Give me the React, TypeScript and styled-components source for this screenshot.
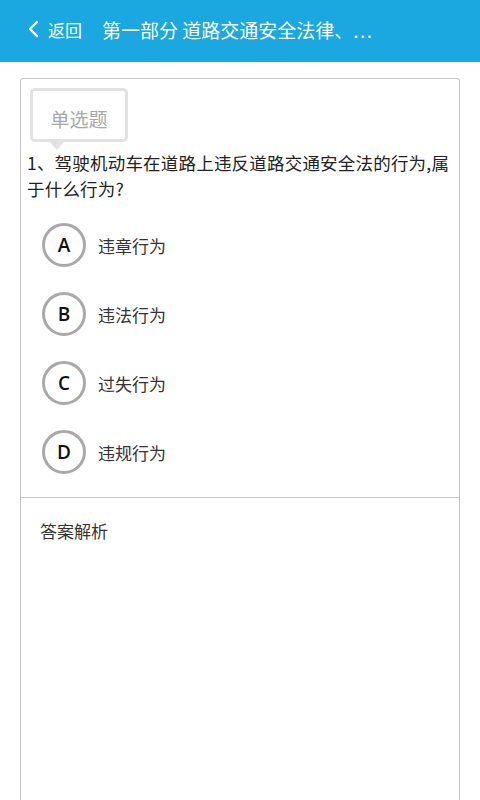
import React from "react";
import styled, { createGlobalStyle } from "styled-components";

const Global = createGlobalStyle`
  html, body { margin: 0; padding: 0; background: #fff; }
  body { font-family: "Noto Sans CJK SC", "Noto Sans", sans-serif; }
  * { box-sizing: border-box; }
`;

const Page = styled.div`
  width: 480px;
  height: 800px;
  overflow: hidden;
  display: flex;
  flex-direction: column;
  background: #fff;
`;

const Header = styled.header`
  height: 62px;
  flex: none;
  background: #1ba7e0;
  display: flex;
  align-items: center;
  padding: 0 0 4px 27px;
  color: #fff;
`;

const Back = styled.div`
  display: flex;
  align-items: center;
  gap: 9px;
  font-size: 17px;
  margin-right: 20px;
`;

const Title = styled.div`
  font-size: 19px;
  white-space: nowrap;
`;

const Dots = styled.span`
  letter-spacing: 1.5px;
`;

const Body = styled.main`
  flex: 1;
  padding: 16px 20px 0 20px;
  display: flex;
`;

const Card = styled.section`
  flex: 1;
  border: 1.5px solid #c6c6c6;
  border-bottom: none;
  border-radius: 3px 3px 0 0;
  display: flex;
  flex-direction: column;
`;

const QuestionArea = styled.div`
  padding: 9px 2px 0 6px;
  height: 419px;
  border-bottom: 1.5px solid #c6c6c6;
`;

const Tag = styled.div`
  position: relative;
  margin-left: 3px;
  width: 98px;
  height: 54px;
  border: 3px solid #e2e2e2;
  border-radius: 5px;
  display: flex;
  align-items: center;
  justify-content: center;
  padding-top: 7px;
  font-size: 19px;
  color: #a8a8a8;
  &::after {
    content: "";
    position: absolute;
    left: 16px;
    bottom: -11px;
    border-left: 8px solid transparent;
    border-right: 8px solid transparent;
    border-top: 9px solid #e2e2e2;
  }
`;

const Question = styled.p`
  margin: 8px 0 0 0;
  font-size: 17.5px;
  letter-spacing: 0.2px;
  line-height: 26px;
  color: #222;
`;

const Options = styled.ul`
  list-style: none;
  margin: 21px 0 0 15px;
  padding: 0;
  display: flex;
  flex-direction: column;
  gap: 25px;
`;

const Option = styled.li`
  display: flex;
  align-items: center;
  gap: 12px;
  font-size: 17px;
  color: #333;
`;

const Circle = styled.span`
  width: 44px;
  height: 44px;
  border-radius: 50%;
  border: 3px solid #a9a9a9;
  display: flex;
  align-items: center;
  justify-content: center;
  font-family: "Open Sans", sans-serif;
  font-weight: 600;
  font-size: 19px;
  color: #111;
`;

const Analysis = styled.div`
  padding: 20px 0 0 19px;
  font-size: 17px;
  color: #333;
`;

const opts = [
  ["A", "违章行为"],
  ["B", "违法行为"],
  ["C", "过失行为"],
  ["D", "违规行为"],
];

export default function App() {
  return (
    <Page>
      <Global />
      <Header>
        <Back>
          <svg width="12" height="18" viewBox="0 0 12 18">
            <path d="M10 2 L3 9 L10 16" fill="none" stroke="#fff" strokeWidth="2.4" strokeLinecap="round" strokeLinejoin="round" />
          </svg>
          <span>返回</span>
        </Back>
        <Title>
          第一部分 道路交通安全法律、<Dots>...</Dots>
        </Title>
      </Header>
      <Body>
        <Card>
          <QuestionArea>
            <Tag>单选题</Tag>
            <Question>1、驾驶机动车在道路上违反道路交通安全法的行为,属于什么行为?</Question>
            <Options>
              {opts.map(([k, t]) => (
                <Option key={k}>
                  <Circle>{k}</Circle>
                  <span>{t}</span>
                </Option>
              ))}
            </Options>
          </QuestionArea>
          <Analysis>答案解析</Analysis>
        </Card>
      </Body>
    </Page>
  );
}
